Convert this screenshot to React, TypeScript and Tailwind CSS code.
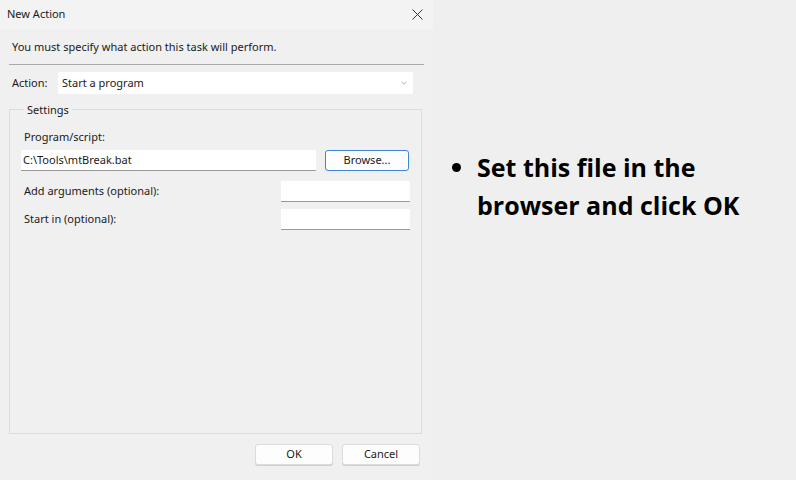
import React from "react";

const ui = "font-['Segoe_UI','Noto_Sans',sans-serif] text-[11px] text-[#1a1a1a]";

function TextBox({ value, className }: { value?: string; className: string }) {
  return (
    <div
      className={`flex h-[21px] items-center border-b border-[#9a9a9a] bg-white px-[2px] ${className}`}
    >
      {value}
    </div>
  );
}

function Button({ children, primary }: { children: React.ReactNode; primary?: boolean }) {
  return (
    <button
      className={`flex h-[21px] w-full items-center justify-center rounded-[3px] bg-[#fdfdfd] ${
        primary
          ? "border border-[#3f87d6]"
          : "border border-[#dcdcdc] shadow-[0_1px_0_#cfcfcf]"
      }`}
    >
      {children}
    </button>
  );
}

export default function App() {
  return (
    <div className="flex h-[480px] w-[796px] bg-[#efefef]">
      {/* dialog */}
      <div className={`flex h-full w-[433px] flex-col bg-[#f0f0f0] ${ui}`}>
        <div className="flex h-[29px] shrink-0 items-center justify-between bg-[#f3f3f3] pl-[7px] pr-[10px]">
          <span>New Action</span>
          <svg width="11" height="11" viewBox="0 0 11 11" fill="none" stroke="#333" strokeWidth="1">
            <path d="M0.5 0.5l10 10M10.5 0.5l-10 10" />
          </svg>
        </div>

        <div className="flex flex-1 flex-col px-[9px]">
          <p className="mt-[11px] pl-[3px] leading-[14px]">
            You must specify what action this task will perform.
          </p>
          <div className="mt-[10px] border-t border-[#a9a9a9]" />

          <div className="mt-[7px] flex items-center">
            <span className="w-[49px] pl-[3px]">Action:</span>
            <div className="flex h-[22px] w-[355px] items-center justify-between bg-white pl-[4px] pr-[6px]">
              <span>Start a program</span>
              <svg width="6" height="4" viewBox="0 0 6 4" fill="none" stroke="#9a9a9a" strokeWidth="0.8">
                <path d="M0.5 0.8l2.5 2.4 2.5-2.4" />
              </svg>
            </div>
          </div>

          <fieldset className="mt-[9px] h-[331px] w-[413px] border border-[#dcdcdc] px-[11px] pt-[14px]">
            <legend className="ml-[3px] px-[3px] leading-[13px]">Settings</legend>
            <div className="pl-[3px] leading-[14px]">Program/script:</div>
            <div className="mt-[6px] flex items-center">
              <TextBox value="C:\Tools\mtBreak.bat" className="w-[295px]" />
              <div className="ml-[9px] w-[84px]">
                <Button primary>Browse...</Button>
              </div>
            </div>
            <div className="mt-[10px] flex items-center justify-between pl-[3px]">
              <span>Add arguments (optional):</span>
              <TextBox className="w-[129px]" />
            </div>
            <div className="mt-[7px] flex items-center justify-between pl-[3px]">
              <span>Start in (optional):</span>
              <TextBox className="w-[129px]" />
            </div>
          </fieldset>

          <div className="mt-[10px] flex justify-end gap-[9px] pr-[4px]">
            <div className="w-[78px]">
              <Button>OK</Button>
            </div>
            <div className="w-[78px]">
              <Button>Cancel</Button>
            </div>
          </div>
        </div>
      </div>

      {/* note */}
      <div className="flex-1 pl-[24px] pt-[148px] font-['Open_Sans',sans-serif] text-[25px] font-bold leading-[38px] text-black">
        <ul className="list-disc pl-[20px]">
          <li>
            Set this file in the
            <br />
            browser and click OK
          </li>
        </ul>
      </div>
    </div>
  );
}
